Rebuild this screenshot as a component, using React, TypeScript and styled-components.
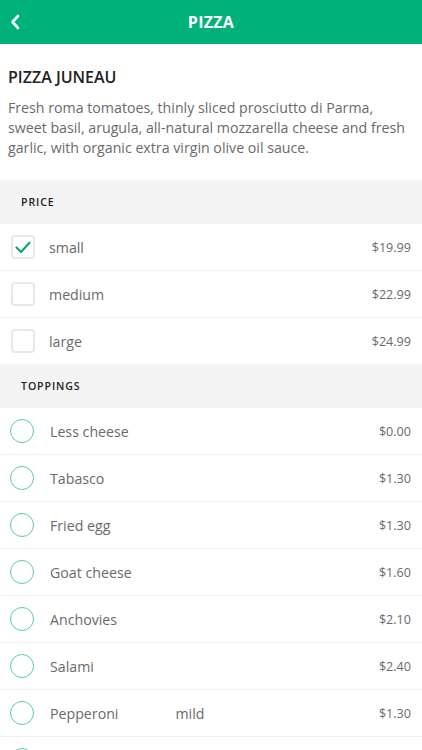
import styled, { createGlobalStyle } from 'styled-components'

const GlobalStyle = createGlobalStyle`
  html, body {
    margin: 0;
    padding: 0;
    background: #ffffff;
    font-family: 'Open Sans', 'Liberation Sans', sans-serif;
  }
`

const Page = styled.div`
  width: 422px;
  height: 750px;
  overflow: hidden;
  background: #ffffff;
`

const Header = styled.header`
  height: 44px;
  background: #00b27a;
  display: flex;
  align-items: center;
  justify-content: center;
  position: relative;
`

const BackButton = styled.button`
  position: absolute;
  left: 6px;
  top: 12px;
  width: 18px;
  height: 20px;
  padding: 0;
  border: none;
  background: none;
  display: flex;
  align-items: center;
  justify-content: center;
`

const HeaderTitle = styled.h1`
  margin: 0;
  color: #ffffff;
  font-size: 16px;
  font-weight: 700;
  letter-spacing: 0.3px;
`

const Intro = styled.section`
  padding: 22px 10px 22px 8px;
`

const DishName = styled.h2`
  margin: 0 0 10px;
  font-size: 16px;
  font-weight: 600;
  color: #222222;
  line-height: 22px;
`

const DishText = styled.p`
  margin: 0;
  font-size: 14.2px;
  line-height: 20px;
  color: #6a6a6a;
`

const SectionHeader = styled.div`
  height: 44px;
  background: #f4f4f4;
  display: flex;
  align-items: center;
  padding-left: 21px;
  font-size: 10.6px;
  font-weight: 600;
  letter-spacing: 0.9px;
  color: #222222;
`

const Row = styled.div`
  height: 46px;
  display: flex;
  align-items: center;
  padding: 0 11px 0 10px;
  border-bottom: 1px solid #f0f0f0;

  &:last-child {
    border-bottom: none;
  }
`

const CheckBox = styled.span`
  width: 20px;
  height: 20px;
  margin-left: 1px;
  border: 2px solid #e8e8e8;
  border-radius: 4px;
  display: flex;
  align-items: center;
  justify-content: center;
  flex-shrink: 0;
`

const Radio = styled.span`
  width: 22px;
  height: 22px;
  border: 1.6px solid #5ccaa8;
  border-radius: 50%;
  flex-shrink: 0;
`

const Label = styled.span<{ $indent: number }>`
  margin-left: ${({ $indent }) => $indent}px;
  font-size: 14.2px;
  color: #6a6a6a;
`

const Note = styled.span`
  margin-left: 57px;
  font-size: 14.2px;
  color: #6a6a6a;
`

const Price = styled.span`
  margin-left: auto;
  font-size: 12.6px;
  color: #6a6a6a;
`

const sizes = [
  { name: 'small', price: '$19.99', checked: true },
  { name: 'medium', price: '$22.99', checked: false },
  { name: 'large', price: '$24.99', checked: false },
]

const toppings = [
  { name: 'Less cheese', price: '$0.00' },
  { name: 'Tabasco', price: '$1.30' },
  { name: 'Fried egg', price: '$1.30' },
  { name: 'Goat cheese', price: '$1.60' },
  { name: 'Anchovies', price: '$2.10' },
  { name: 'Salami', price: '$2.40' },
  { name: 'Pepperoni', price: '$1.30', note: 'mild' },
]

export default function App() {
  return (
    <Page>
      <GlobalStyle />
      <Header>
        <BackButton aria-label="Back">
          <svg width="10" height="16" viewBox="0 0 10 16" fill="none">
            <path d="M8 2 L2.5 8 L8 14" stroke="#fff" strokeWidth="2.6" strokeLinecap="round" strokeLinejoin="round" />
          </svg>
        </BackButton>
        <HeaderTitle>PIZZA</HeaderTitle>
      </Header>

      <Intro>
        <DishName>PIZZA JUNEAU</DishName>
        <DishText>
          Fresh roma tomatoes, thinly sliced prosciutto di Parma, sweet basil, arugula, all-natural
          mozzarella cheese and fresh garlic, with organic extra virgin olive oil sauce.
        </DishText>
      </Intro>

      <SectionHeader>PRICE</SectionHeader>
      <div>
        {sizes.map(s => (
          <Row key={s.name}>
            <CheckBox>
              {s.checked && (
                <svg width="16" height="13" viewBox="0 0 16 13" fill="none">
                  <path d="M1.5 6.5 L6 11 L14.5 1.8" stroke="#13a57a" strokeWidth="2.2" strokeLinecap="round" strokeLinejoin="round" />
                </svg>
              )}
            </CheckBox>
            <Label $indent={14}>{s.name}</Label>
            <Price>{s.price}</Price>
          </Row>
        ))}
      </div>

      <SectionHeader>TOPPINGS</SectionHeader>
      <div>
        {toppings.map(t => (
          <Row key={t.name}>
            <Radio />
            <Label $indent={16}>{t.name}</Label>
            {t.note && <Note>{t.note}</Note>}
            <Price>{t.price}</Price>
          </Row>
        ))}
        {/* next topping row, only its radio top shows at the bottom edge */}
        <Row>
          <Radio />
        </Row>
      </div>
    </Page>
  )
}
